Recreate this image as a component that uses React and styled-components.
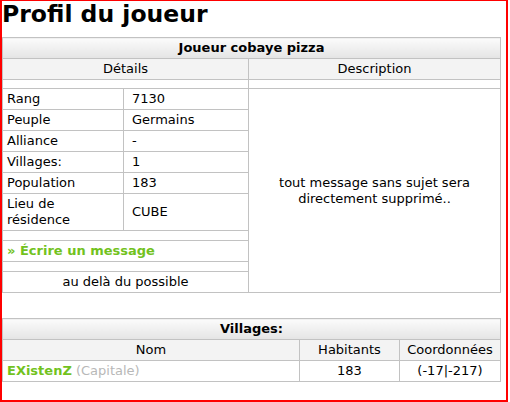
import React from "react";
import styled, { createGlobalStyle } from "styled-components";

const GlobalStyle = createGlobalStyle`
  html, body {
    margin: 0;
    padding: 0;
    background: #fff;
  }
  body {
    font-family: "DejaVu Sans", Verdana, sans-serif;
    color: #000;
  }
`;

// --- Layout ---
const Frame = styled.div`
  box-sizing: border-box;
  width: 508px;
  height: 402px;
  border: 2px solid #f00;
  border-top-width: 1px;
  overflow: hidden;
`;

const PageTitle = styled.h1`
  margin: 0 0 10px 0;
  font-size: 23.5px;
  font-weight: bold;
  line-height: 26px;
`;

// --- Tables ---
const Table = styled.table`
  width: 498px;
  border-collapse: collapse;
  table-layout: fixed;
  margin-bottom: ${(p) => p.$gap || 0}px;
  font-size: 13px;
  line-height: 16px;
`;

const HeadCell = styled.th`
  border: 1px solid #c2c2c2;
  padding: 2px 4px;
  font-weight: bold;
  text-align: center;
  background: linear-gradient(#fbfbfb, #e4e4e4);
`;

const SubHeadCell = styled.td`
  border: 1px solid #c2c2c2;
  padding: 2px 4px;
  text-align: center;
  background: #f3f3f3;
`;

const Cell = styled.td`
  border: 1px solid #c2c2c2;
  padding: 2px ${(p) => p.$padX || 4}px;
  text-align: ${(p) => p.$align || "left"};
  vertical-align: middle;
`;

const SpacerCell = styled.td`
  border: 1px solid #c2c2c2;
  padding: 0;
  height: ${(p) => p.$h}px;
`;

const DescCell = styled.td`
  border: 1px solid #c2c2c2;
  padding: 2px 30px;
  text-align: center;
  vertical-align: middle;
`;

const GreenLink = styled.a`
  color: #72c21e;
  font-weight: bold;
  text-decoration: none;
`;

const Muted = styled.span`
  color: #b8b8b8;
`;

// --- Data ---
const details = [
  ["Rang", "7130"],
  ["Peuple", "Germains"],
  ["Alliance", "-"],
  ["Villages:", "1"],
  ["Population", "183"],
  [<>Lieu de<br />résidence</>, "CUBE"],
];

const villages = [
  { name: "EXistenZ", capital: true, pop: 183, coords: "(-17|-217)" },
];

const App = () => (
  <>
    <GlobalStyle />
    <Frame>
      <PageTitle>Profil du joueur</PageTitle>

      <Table $gap={25}>
        <colgroup>
          <col style={{ width: 121 }} />
          <col style={{ width: 125 }} />
          <col style={{ width: 252 }} />
        </colgroup>
        <thead>
          <tr>
            <HeadCell colSpan={3}>Joueur cobaye pizza</HeadCell>
          </tr>
          <tr>
            <SubHeadCell colSpan={2}>Détails</SubHeadCell>
            <SubHeadCell>Description</SubHeadCell>
          </tr>
        </thead>
        <tbody>
          <tr>
            <SpacerCell colSpan={2} $h={8} />
            <SpacerCell $h={8} />
          </tr>
          {details.map(([label, value], i) => (
            <tr key={i}>
              <Cell>{label}</Cell>
              <Cell $padX={8}>{value}</Cell>
              {i === 0 && (
                <DescCell rowSpan={10}>
                  tout message sans sujet sera directement supprimé..
                </DescCell>
              )}
            </tr>
          ))}
          <tr>
            <SpacerCell colSpan={2} $h={9} />
          </tr>
          <tr>
            <Cell colSpan={2}>
              <GreenLink href="#">» Écrire un message</GreenLink>
            </Cell>
          </tr>
          <tr>
            <SpacerCell colSpan={2} $h={9} />
          </tr>
          <tr>
            <Cell colSpan={2} $align="center">au delà du possible</Cell>
          </tr>
        </tbody>
      </Table>

      <Table>
        <colgroup>
          <col style={{ width: 297 }} />
          <col style={{ width: 100 }} />
          <col style={{ width: 101 }} />
        </colgroup>
        <thead>
          <tr>
            <HeadCell colSpan={3}>Villages:</HeadCell>
          </tr>
          <tr>
            <SubHeadCell>Nom</SubHeadCell>
            <SubHeadCell>Habitants</SubHeadCell>
            <SubHeadCell>Coordonnées</SubHeadCell>
          </tr>
        </thead>
        <tbody>
          {villages.map((v) => (
            <tr key={v.name}>
              <Cell>
                <GreenLink href="#">{v.name}</GreenLink>
                {v.capital && <Muted> (Capitale)</Muted>}
              </Cell>
              <Cell $align="center">{v.pop}</Cell>
              <Cell $align="center">{v.coords}</Cell>
            </tr>
          ))}
        </tbody>
      </Table>
    </Frame>
  </>
);

export default App;
